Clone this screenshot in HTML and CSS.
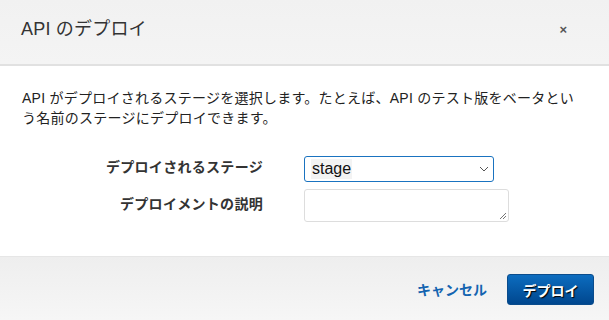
FILE: index.html
```html
<!DOCTYPE html>
<html lang="ja">
<head>
<meta charset="utf-8">
<link rel="stylesheet" href="styles.css">
</head>
<body>
<div class="modal">
  <div class="modal-header">
    <h1 class="title">API のデプロイ</h1>
    <span class="close">×</span>
  </div>
  <div class="modal-body">
    <p class="desc">API がデプロイされるステージを選択します。たとえば、API のテスト版をベータという名前のステージにデプロイできます。</p>
    <div class="form">
      <label class="label label-first">デプロイされるステージ</label>
      <div class="select"><span class="select-value">stage</span><svg class="chev" width="10" height="6" viewBox="0 0 10 6"><path d="M1 1 L5 5 L9 1" fill="none" stroke="#555" stroke-width="1"/></svg></div>
      <label class="label label-second">デプロイメントの説明</label>
      <div class="textarea"><svg class="grip" width="8" height="8" viewBox="0 0 8 8"><path d="M7 1 L1 7 M7 4 L4 7" stroke="#777" stroke-width="1"/></svg></div>
    </div>
  </div>
  <div class="modal-footer">
    <a class="cancel">キャンセル</a>
    <button class="deploy">デプロイ</button>
  </div>
</div>
</body>
</html>
```
FILE: styles.css
```css
html, body {
  margin: 0;
  padding: 0;
}
body {
  width: 609px;
  height: 320px;
  overflow: hidden;
  font-family: "Liberation Sans", "Noto Sans CJK JP", sans-serif;
  color: #222;
  background: #fff;
}
.modal {
  display: flex;
  flex-direction: column;
  height: 320px;
}
.modal-header {
  height: 64px;
  border-bottom: 2px solid #e1e1e1;
  background: linear-gradient(#f1f1f1, #f4f4f4);
  display: flex;
  align-items: center;
  justify-content: space-between;
  padding: 0 42px 0 21px;
}
.title {
  margin: 0;
  font-size: 18px;
  font-weight: normal;
  letter-spacing: 0.2px;
  color: #333;
  position: relative;
  top: -5px;
}
.close {
  font-size: 13px;
  font-weight: bold;
  color: #555;
  position: relative;
  top: -3px;
}
.modal-body {
  height: 191px;
  padding: 22px 22px 0 22px;
  box-sizing: border-box;
  border-bottom: 1px solid #e6e6e6;
}
.desc {
  margin: 0;
  font-size: 14px;
  line-height: 20px;
  letter-spacing: 0.25px;
  color: #222;
}
.form {
  display: grid;
  grid-template-columns: 241px auto;
  column-gap: 41px;
  row-gap: 7px;
  margin-top: 28px;
  align-items: start;
}
.label {
  text-align: right;
  font-size: 14px;
  line-height: 20px;
  font-weight: bold;
  letter-spacing: 0.3px;
  color: #333;
}
.label-first {
  padding-top: 1px;
}
.label-second {
  padding-top: 5px;
}
.select {
  width: 190px;
  height: 26px;
  box-sizing: border-box;
  border: 1px solid #1a73c0;
  border-radius: 3px;
  display: flex;
  align-items: center;
  justify-content: space-between;
  padding: 0 4px 0 6px;
  font-size: 16px;
  color: #111;
}
.select-value {
  background: #f3f3f3;
  padding: 0 1px;
  line-height: 20px;
}
.textarea {
  width: 205px;
  height: 33px;
  box-sizing: border-box;
  border: 1px solid #ddd;
  border-radius: 3px;
  position: relative;
}
.grip {
  position: absolute;
  right: 1px;
  bottom: 1px;
}
.modal-footer {
  flex: 1;
  background: linear-gradient(#eeeeee, #f6f6f6);
  display: flex;
  align-items: center;
  justify-content: flex-end;
  padding: 0 15px 0 0;
  gap: 20px;
}
.cancel {
  font-size: 14px;
  font-weight: bold;
  color: #1464b0;
}
.deploy {
  width: 87px;
  height: 31px;
  border: 1px solid #0a4c8c;
  border-radius: 3px;
  background: linear-gradient(#0c6cbf, #00478e);
  color: #fff;
  font-family: "Liberation Sans", "Noto Sans CJK JP", sans-serif;
  font-size: 14px;
  font-weight: bold;
  text-shadow: 1px 1px 1px #000;
  padding: 0;
  position: relative;
  top: 1px;
}
```
